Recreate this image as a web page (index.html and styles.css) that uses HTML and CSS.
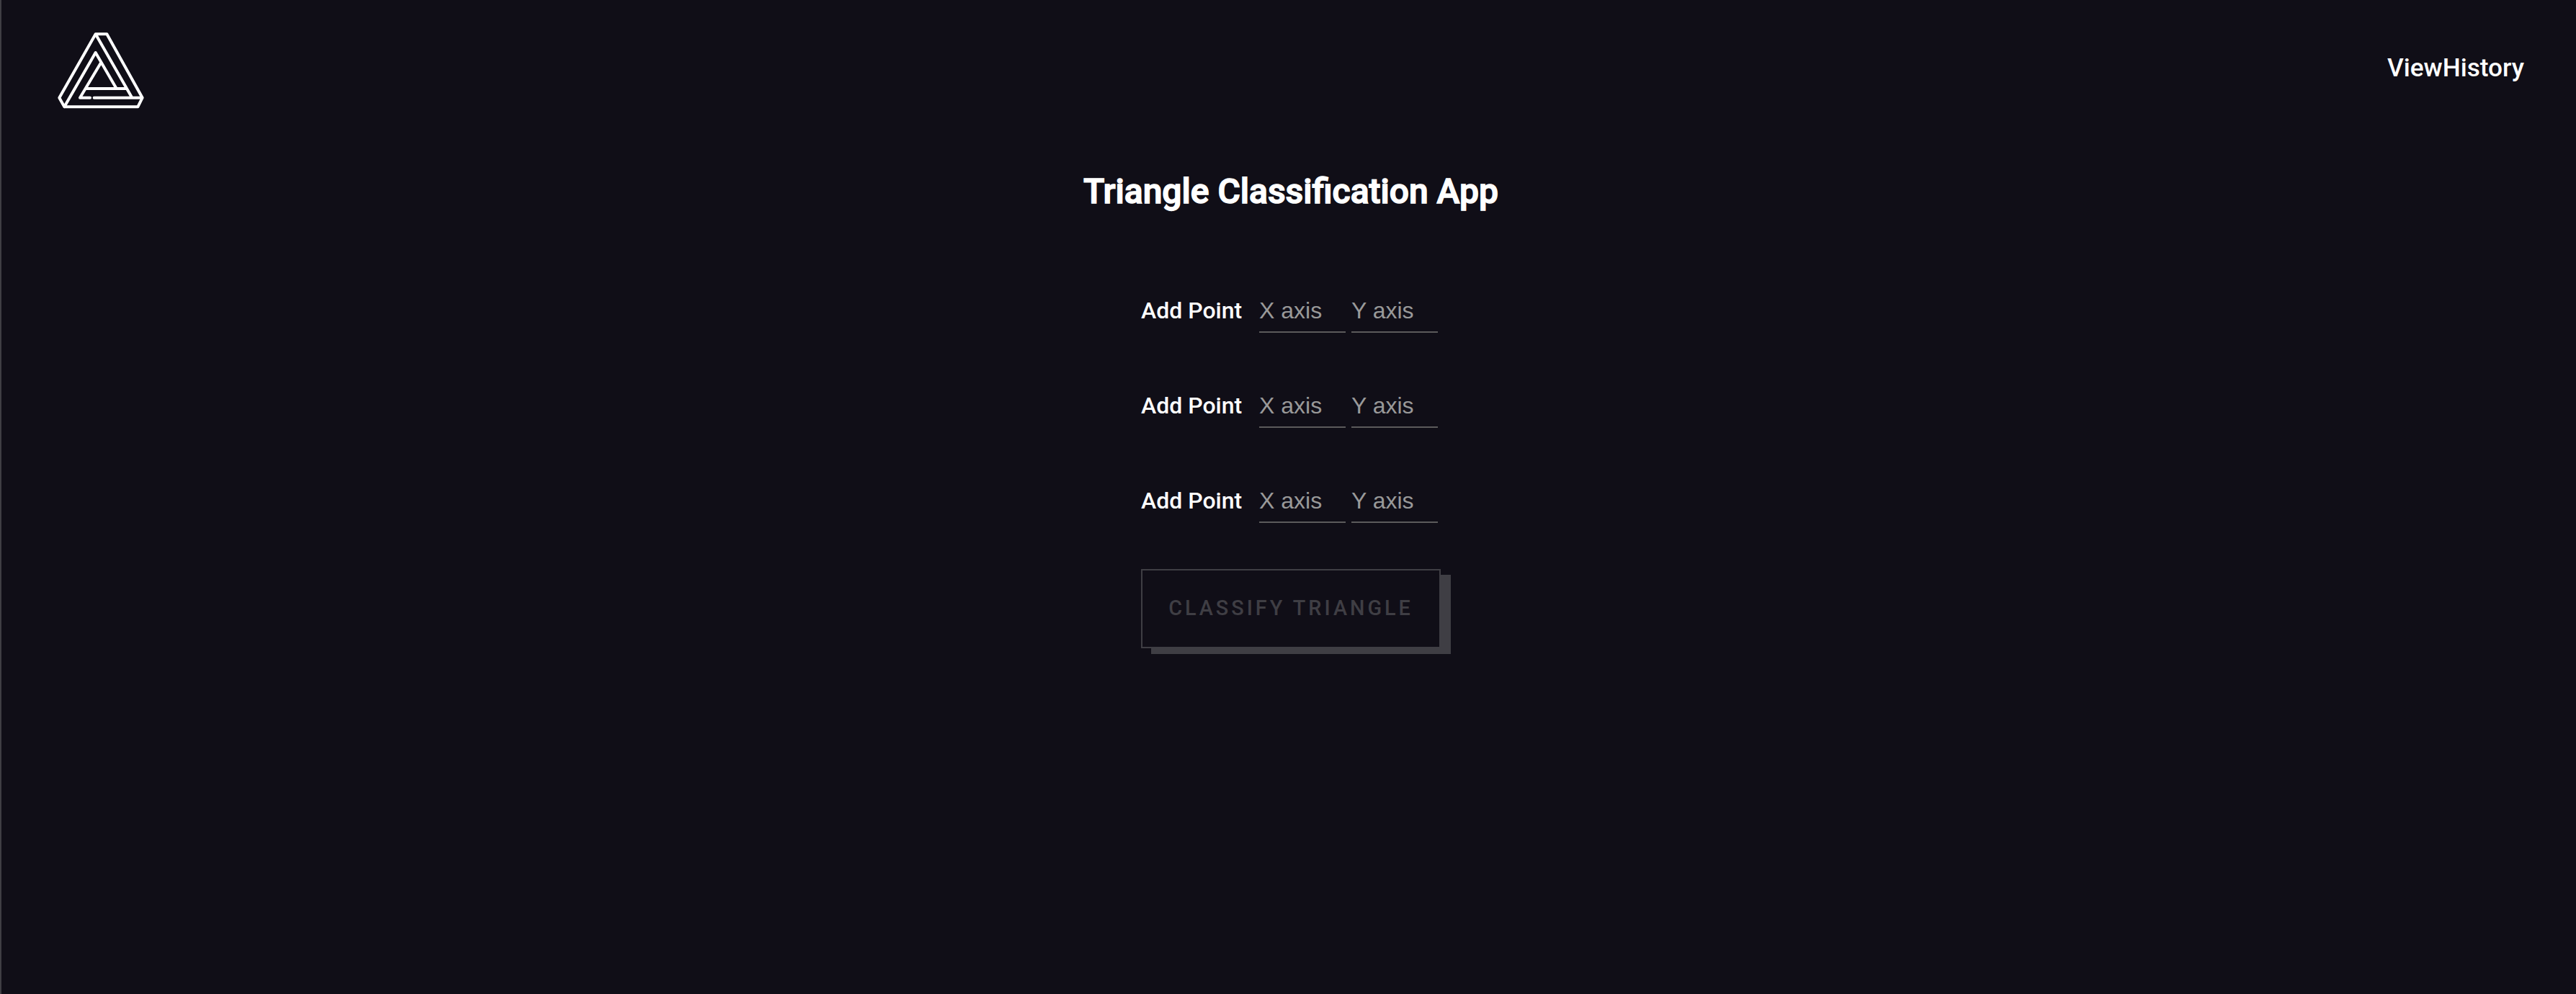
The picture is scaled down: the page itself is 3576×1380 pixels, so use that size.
FILE: index.html
```html
<!DOCTYPE html>
<html lang="en">
<head>
<meta charset="utf-8">
<title>Triangle Classification App</title>
<link rel="stylesheet" href="styles.css">
</head>
<body>
<header class="header">
  <a class="logo" href="#" aria-label="Home">
    <svg class="logo-icon" viewBox="60 42 360 324">
      <path d="M218 52H265L413 317L394 355H88L67 317ZL370 317M212 317H413M195 317H153L240 172M88 355L218 129L305 279M180 279H348"/>
    </svg>
  </a>
  <a class="history-link" href="#">ViewHistory</a>
</header>
<main class="content">
  <h1 class="title">Triangle Classification App</h1>
  <form class="form">
    <div class="row">
      <span class="label">Add Point</span>
      <input class="axis" type="text" placeholder="X axis">
      <input class="axis" type="text" placeholder="Y axis">
    </div>
    <div class="row">
      <span class="label">Add Point</span>
      <input class="axis" type="text" placeholder="X axis">
      <input class="axis" type="text" placeholder="Y axis">
    </div>
    <div class="row">
      <span class="label">Add Point</span>
      <input class="axis" type="text" placeholder="X axis">
      <input class="axis" type="text" placeholder="Y axis">
    </div>
    <button class="submit" type="button">CLASSIFY TRIANGLE</button>
  </form>
</main>
</body>
</html>
```

FILE: styles.css
```css
* { box-sizing: border-box; }

body {
  margin: 0;
  min-height: 100vh;
  border-left: 2px solid #3f3e44;
  background: #100e17;
  color: #fff;
  font-family: Roboto, sans-serif;
  font-weight: 500;
}

.header {
  display: flex;
  justify-content: space-between;
  align-items: flex-start;
  height: 220px;
  padding: 44px 72px 0 78px;
}

.logo-icon {
  display: block;
  width: 120px;
  height: 108px;
  fill: none;
  stroke: #fff;
  stroke-width: 12;
  stroke-linecap: round;
  stroke-linejoin: round;
}

.history-link {
  margin-top: 30px;
  color: inherit;
  font-size: 35.2px;
  line-height: 40px;
  text-decoration: none;
}

.content {
  display: flex;
  flex-direction: column;
  align-items: center;
  padding-left: 6px;
}

.title {
  margin: 16px 0 94px;
  font-size: 48px;
  font-weight: 500;
  line-height: 60px;
  -webkit-text-stroke: 1.5px #fff;
}

.form {
  width: 416px;
}

.row {
  display: flex;
  align-items: flex-start;
  gap: 8px;
  height: 132px;
  padding-top: 10px;
}

.label {
  width: 156px;
  font-size: 32px;
  line-height: 62px;
}

.axis {
  width: 120px;
  height: 62px;
  padding: 3px 0 0;
  border: 0;
  border-bottom: 2px solid #5b5a5b;
  outline: none;
  background: transparent;
  color: #fff;
  font: 400 32px "Liberation Sans", sans-serif;
}

.axis::placeholder {
  color: #999;
  opacity: 1;
}

.submit {
  display: block;
  width: 416px;
  height: 110px;
  margin-top: 4px;
  padding: 0 0 2px;
  border: 2px solid #3f3e44;
  background: #100e17;
  box-shadow: 14px 8px 0 #3f3e44;
  color: #3f3e44;
  font: 500 28.8px Roboto, sans-serif;
  letter-spacing: 4px;
  text-align: center;
}
```
